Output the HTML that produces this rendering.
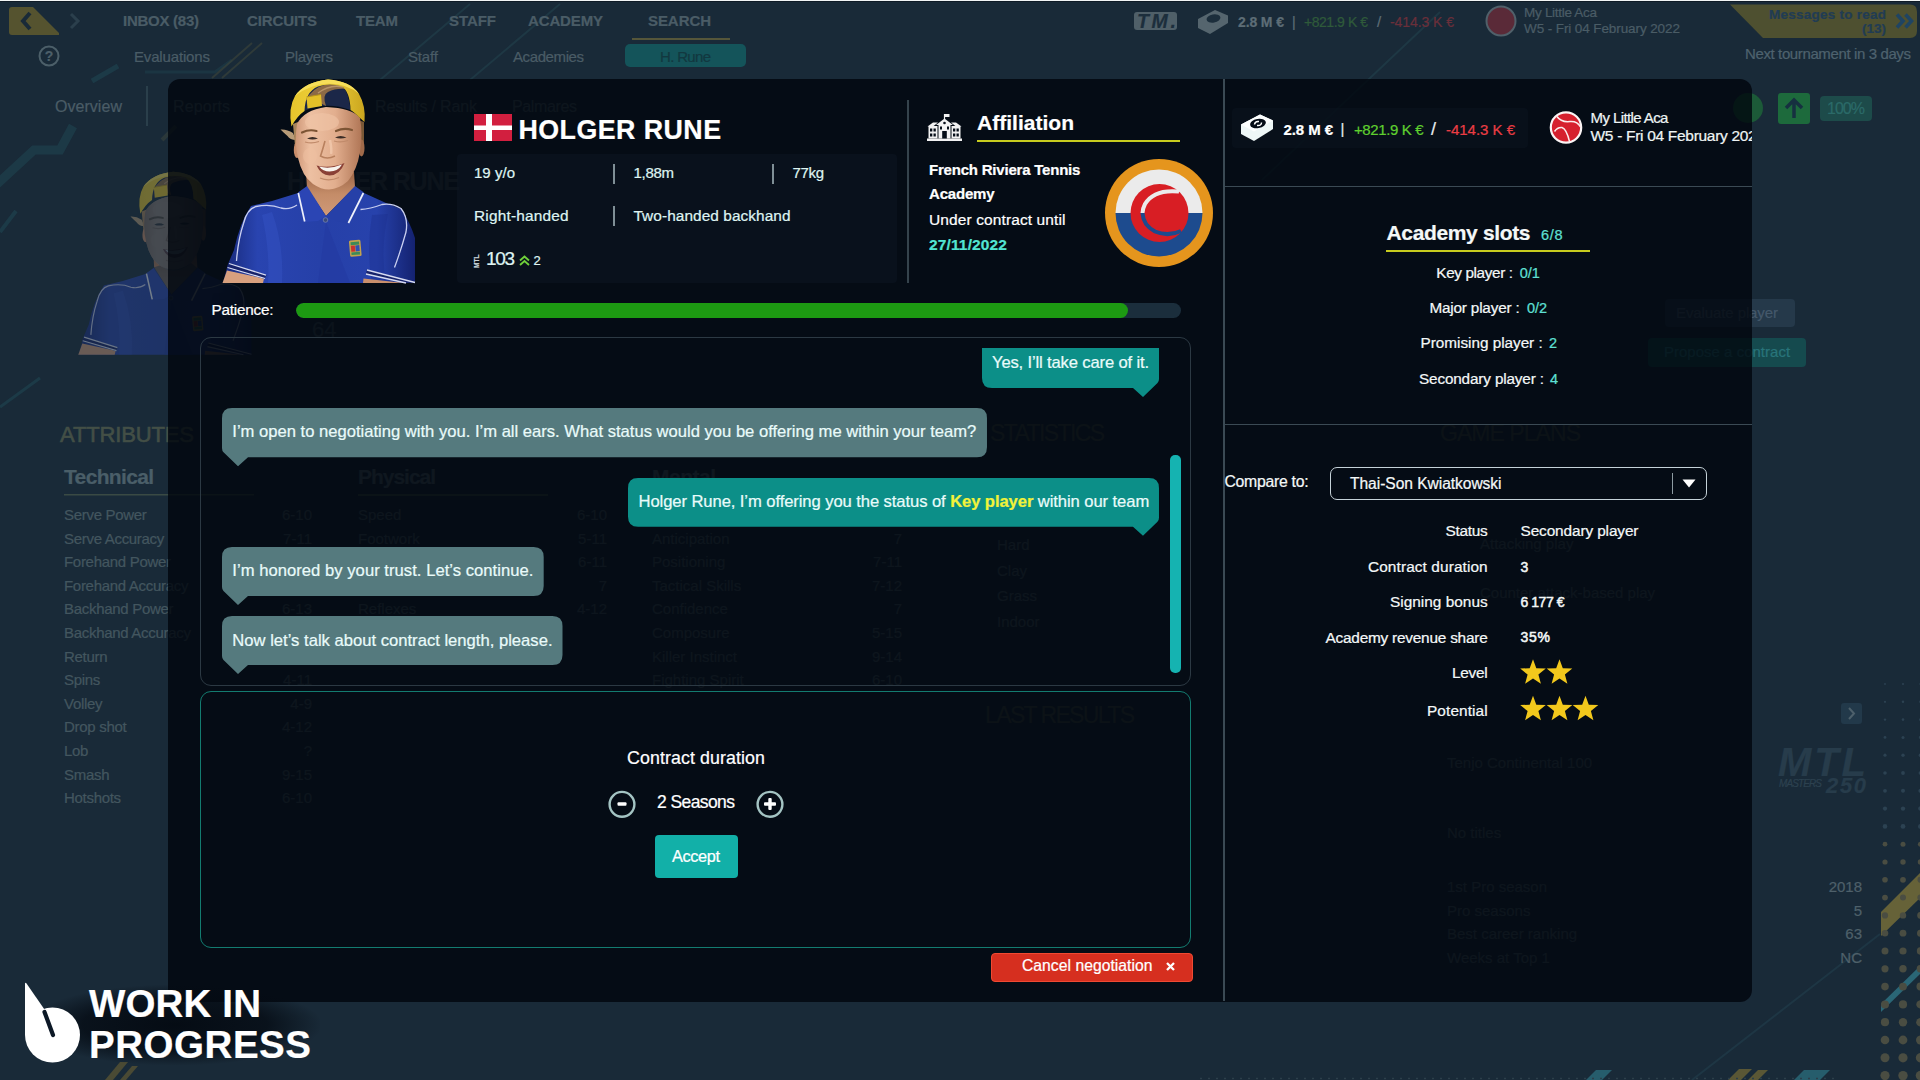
<!DOCTYPE html>
<html lang="en">
<head>
<meta charset="utf-8">
<title>Tennis Manager – Contract negotiation</title>
<style>

*{box-sizing:border-box;margin:0;padding:0}
html,body{width:1920px;height:1080px;overflow:hidden}
body{background:#192a38;font-family:"Liberation Sans",sans-serif;color:#fff;position:relative}
.t{position:absolute;white-space:pre;line-height:1;-webkit-text-stroke:.22px}
.a{position:absolute}
#bg,#fg{position:absolute;left:0;top:0;width:1920px;height:1080px;overflow:hidden}
#modal{position:absolute;left:168px;top:79px;width:1584px;height:922.500px;border-radius:12px;background:rgba(0,5,13,.8);overflow:hidden}
#modal .in{position:absolute;left:-168px;top:-79px;width:1920px;height:1080px}

</style>
</head>
<body>
<svg width="0" height="0" style="position:absolute"><defs>
<linearGradient id="skin" x1="0" x2="1"><stop offset="0" stop-color="#cf9878"/><stop offset=".22" stop-color="#edc0a2"/><stop offset=".6" stop-color="#e2ae8e"/><stop offset="1" stop-color="#b07656"/></linearGradient>
<linearGradient id="neck" x1="0" y1="0" x2="0" y2="1"><stop offset="0" stop-color="#9c6546"/><stop offset=".5" stop-color="#c48c68"/><stop offset="1" stop-color="#d09a78"/></linearGradient>
<linearGradient id="shirt" x1="0" x2="1"><stop offset="0" stop-color="#172878"/><stop offset=".18" stop-color="#2944b0"/><stop offset=".5" stop-color="#2640a8"/><stop offset=".8" stop-color="#2742ac"/><stop offset="1" stop-color="#142270"/></linearGradient>
<linearGradient id="cap" x1="0" x2="1"><stop offset="0" stop-color="#e6c42c"/><stop offset=".5" stop-color="#f0d23c"/><stop offset="1" stop-color="#caa51e"/></linearGradient>
<g id="player">
<!-- shirt body -->
<path d="M223 283 L228 264 L234 250 Q240 222 251 206 L272 201 L298 193 L326 216 L364 193 L386 203 L401 209 Q410 222 415 238 L415 283 Z" fill="url(#shirt)"/>
<!-- shirt folds -->
<path d="M326 222 L318 283 H350 Z" fill="#2238a0" opacity=".55"/>
<path d="M262 215 Q270 250 268 283 H282 Q284 245 272 212Z" fill="#3a58cc" opacity=".35"/>
<path d="M372 215 Q366 250 372 283 H386 Q380 250 388 214Z" fill="#1c3090" opacity=".45"/>
<!-- forearms -->
<path d="M222.500 283 L227 270.500 L264 278.500 L263 283Z" fill="#d8a07e"/>
<path d="M363.500 278.500 L404 283 H363Z" fill="#c98f6c"/>
<!-- cuffs -->
<path d="M229 263 L266.500 275 L264.500 279 L227 268Z" fill="#16226a"/>
<path d="M229 263.500 L266 275.200 M227.500 267.500 L265 278.500" stroke="#d5daf2" stroke-width="1.300" fill="none"/>
<path d="M367 269.500 L415 282 V283 H408 L366 274Z" fill="#16226a"/>
<path d="M367 270 L415 282.500 M366 274 L406 283" stroke="#d5daf2" stroke-width="1.300" fill="none"/>
<!-- piping -->
<path d="M236.500 261 Q238 240 243.500 223.500 Q247 209 256 206.500 Q270 203.500 281 208 Q290 210 297 205" stroke="#c9cff0" stroke-width="1.300" fill="none"/>
<path d="M394.500 267.500 Q401 250 406 232 Q408.500 218 401 208.500 Q392 203 382 204.500 Q370 209 360.500 209.500" stroke="#c9cff0" stroke-width="1.300" fill="none"/>
<!-- neck -->
<path d="M306 172 H354 L355 187 L326 216 L307 188Z" fill="url(#neck)"/>
<!-- collar -->
<path d="M298 192.500 L307 186 L326 216 L318 221 L304 222Z" fill="#2b45b4"/>
<path d="M364 192.500 L355 186 L326 216 L336 221 L348 223.500Z" fill="#2640a8"/>
<path d="M298.300 193 L304.700 221.500" stroke="#eef0fa" stroke-width="1.700"/>
<path d="M363.400 193 L348.400 223" stroke="#eef0fa" stroke-width="1.700"/>
<circle cx="325.500" cy="220" r="2.300" fill="#3a4a7a" stroke="#8a94b8" stroke-width=".600"/>
<!-- shirt logo -->
<g transform="rotate(-5 355 248)"><rect x="349.500" y="240" width="11.500" height="16.500" rx="1.500" fill="#c2a24e"/><rect x="351" y="241.800" width="8.500" height="3" fill="#3c8a58"/><rect x="351" y="245.500" width="4" height="6" fill="#c8322e"/><rect x="355.500" y="245.500" width="4" height="6" fill="#2f4fb4"/><rect x="351" y="252.200" width="8.500" height="2.600" fill="#3c8a58"/></g>
<!-- hair tuft & sides -->
<path d="M280.500 129.500 Q287 129 293 133 L296 140 Q290 140 287.500 136 Q284 133 280.500 129.500Z" fill="#b89c78"/>
<path d="M293 124 L298 122 L300 150 L295 146Z" fill="#a8845a"/>
<path d="M358 120 L364 122 L364 146 L359 152Z" fill="#7a5836"/>
<!-- ears -->
<ellipse cx="297" cy="150" rx="3.200" ry="8" fill="#c98d6a"/>
<ellipse cx="361.500" cy="148" rx="3" ry="8.500" fill="#a06a4a"/>
<!-- face -->
<path d="M297 124 Q294 142 298 158 Q302 176 313 184 Q321 189.500 329 189.500 Q339 189 348 181 Q357 170 360 152 Q363 134 360 118 Q352 108 326 107 Q304 110 297 124Z" fill="url(#skin)"/>
<ellipse cx="322" cy="122" rx="17" ry="9" fill="#f0c4a6" opacity=".6"/>
<ellipse cx="310" cy="156" rx="7" ry="8" fill="#eebfa0" opacity=".55"/>
<!-- brows / eyes -->
<path d="M302 132.500 Q309 129 316.500 131 M336 131 Q344 127.500 352 130" stroke="#7c5434" stroke-width="2.200" fill="none" stroke-linecap="round"/>
<path d="M307 138.500 Q312.500 135.500 318 138.500 Q312.500 140.500 307 138.500Z" fill="#3a2c26"/><path d="M335 137.500 Q340.500 134.500 346.500 137.500 Q340.500 139.500 335 137.500Z" fill="#3a2c26"/>
<path d="M305 142 Q312 144 319 141.500 M334 141 Q341 143 348 140.500" stroke="#c08a6a" stroke-width="1.200" fill="none"/>
<!-- nose -->
<path d="M325 141 Q322 152 320.500 156 Q327 160 335 156" stroke="#b8805e" stroke-width="1.600" fill="none"/>
<path d="M330 140 Q332 150 331 154" stroke="#f4ccb0" stroke-width="2.500" fill="none" opacity=".7"/>
<!-- mouth -->
<path d="M316.500 165.500 Q330 169 344.500 163 Q340 175 329.500 175.500 Q321 175 316.500 165.500Z" fill="#8a4036"/>
<path d="M319 166.500 Q330 169.500 342 164.500 Q338 171.500 329.500 171.500 Q323 171.500 319 166.500Z" fill="#f8f4ee"/>
<path d="M320 178 Q329 182 339 177.500" stroke="#c08a6a" stroke-width="1.200" fill="none"/>
<!-- cap: opening interior first -->
<path d="M304 111 Q304 92 318 86 Q330 82 342 86 Q349 92 350.500 110 Q326 101 304 111Z" fill="#1b2748"/>
<path d="M306 100 Q312 88 326 84.500 Q338 83 346 89 Q336 88 328 92 Q322 95 326 106 Q316 100 306 100Z" fill="#8c6a46"/>
<path d="M318 93 Q330 84 343 87" stroke="#b89468" stroke-width="1.500" fill="none"/>
<!-- cap band -->
<path d="M291.500 126.500 Q288 108 295 96 Q305 82 328 79.600 Q350 81 359 94 Q366 106 364.500 122 L360 118 Q354 112 350.500 110 Q350 92 342 86.500 Q330 82.500 318 86.500 Q305 92 304.500 111 Q297 116 291.500 126.500Z" fill="url(#cap)"/>
<path d="M295 96 Q305 82 328 79.600 Q350 81 359 94 Q348 84 328 83.500 Q308 85 295 96Z" fill="#f6de5a"/>
<!-- strap -->
<path d="M306.500 97 L321 94.500 L322 106 L307.500 108.500Z" fill="#e4c028"/>
<path d="M306.500 97 L321 94.500" stroke="#b8961a" stroke-width="1"/>
</g>
</defs></svg>
<div id="bg">
<div class="a" style="left:0;top:0;width:1920px;height:1px;background:#f2f5f5"></div><div class="a" style="left:0;top:1px;width:1920px;height:1px;background:#0f1b26"></div>
<svg class="a" style="left:0;top:0" width="1920" height="1080" viewBox="0 0 1920 1080">
<g fill="none" stroke="#1d3f4b">
<path d="M-5 186 L34 150 H60 L73 126" stroke-width="9" opacity=".75"/>
<path d="M0 232 L16 211" stroke-width="4" opacity=".8"/>
<path d="M0 407 L40 378" stroke-width="3" opacity=".8"/>
<path d="M92 81 L118 66" stroke-width="5" opacity=".8"/>
<path d="M145 72 L215 72 L232 60" stroke-width="3" opacity=".5"/>
</g>
<g stroke="#213e4a" stroke-width="2" opacity=".7"><path d="M380 80 L470 4"/><path d="M470 80 L560 4"/><path d="M1262 180 L1440 12"/><path d="M162 140 L176 126" stroke="#343f3c" stroke-width="4"/><path d="M212 78 L252 43 M222 78 L262 43" stroke="#39423a" stroke-width="2"/></g>
<!-- back button -->
<path d="M12 7 H33 L59 33 V35 H12 Q9 35 9 32 V10 Q9 7 12 7Z" fill="#55532f"/>
<path d="M30 13 L23 21 L30 29" stroke="#192a38" stroke-width="4" fill="none"/>
<path d="M71 14 L78 21 L71 28" stroke="#2b3f4c" stroke-width="3" fill="none"/>
<!-- help -->
<circle cx="49" cy="56" r="9.5" stroke="#4c5f69" stroke-width="2" fill="none"/>
<!-- search underline -->
<rect x="632" y="38" width="98" height="2" fill="#55563a"/>
<!-- H. Rune pill -->
<rect x="625" y="44" width="121" height="23" rx="5" fill="#14545a"/>
<!-- overview divider -->
<rect x="146" y="86" width="2" height="40" fill="#2a3f4b"/>
<!-- TM logo -->
<rect x="1134" y="12" width="43" height="18" rx="3" fill="#4f5f68"/>
<!-- money icon dim -->
<path d="M1198 19 L1215 10 L1228 15.500 V23 L1210 34 L1198 28Z" fill="#55656e"/><ellipse cx="1213.500" cy="18.500" rx="7" ry="4" transform="rotate(-10 1213.500 18.500)" fill="#1c2e3c"/>
<!-- ball dim -->
<circle cx="1501" cy="21" r="14.500" fill="#5a2a38" stroke="#50606a" stroke-width="2"/>
<!-- messages banner -->
<path d="M1730 4.500 H1910 Q1917 4.500 1917 11.500 V31 Q1917 38 1910 38 H1763 Z" fill="#4e5030"/>
<path d="M1897 14.500 L1903 21 L1897 27.500 M1905.500 14.500 L1911.500 21 L1905.500 27.500" stroke="#1f4463" stroke-width="3.600" fill="none"/>
<!-- 100% widgets -->
<circle cx="1748" cy="108" r="15" fill="#1c5a38"/>
<rect x="1778" y="93" width="32" height="31" rx="3" fill="#1d6a3c"/>
<path d="M1794 118 V101 M1786 108 L1794 100 L1802 108" stroke="#163040" stroke-width="3.500" fill="none"/>
<rect x="1820" y="96" width="52" height="25" rx="4" fill="#1d4b4a"/>
<!-- right buttons -->
<rect x="1665" y="299" width="130" height="28" rx="4" fill="#25394a"/>
<rect x="1648" y="338" width="158" height="29" rx="4" fill="#154a4e"/>
<!-- small > button -->
<rect x="1841" y="703" width="21" height="21" rx="3" fill="#22394a"/>
<path d="M1849 708 L1854 713.500 L1849 719" stroke="#4d606b" stroke-width="2" fill="none"/>
<!-- technical underline -->
<rect x="64" y="494" width="190" height="1.500" fill="#3a4a44"/>
<!-- yellow & teal diagonal stripes bottom-right -->
<path d="M1881 912 L1920 873 V898 L1881 936Z" fill="#666238"/>
<path d="M1881 1004 L1920 966 V974 L1881 1012Z" fill="#2a6676"/>
<path d="M1692 1080 L1880 934" stroke="#1e3644" stroke-width="2"/>
<g fill="#265d6c"><path d="M1586 1080 L1596 1070 H1612 L1602 1080Z"/><path d="M1794 1080 L1804 1070 H1830 L1820 1080Z"/></g>
<g fill="#5a5735"><path d="M1728 1080 L1739 1069 H1752 L1741 1080Z"/><path d="M1748 1080 L1758 1070 H1768 L1758 1080Z"/><path d="M105 1080 L120 1062 H128 L113 1080Z" fill="#4a4a34"/><path d="M120 1080 L132 1066 H138 L126 1080Z" fill="#4a4a34"/></g>
<path d="M1200 1078.500 H1840" stroke="#2c3f4a" stroke-width="1.500" stroke-dasharray="2 6"/>
<g><circle cx="1885" cy="684.0" r="0.9" fill="#2c4252"/><circle cx="1885" cy="701.8" r="1.1" fill="#2c4252"/><circle cx="1885" cy="719.6" r="1.2" fill="#2c4252"/><circle cx="1885" cy="737.4" r="1.4" fill="#2c4252"/><circle cx="1885" cy="755.2" r="1.6" fill="#2c4252"/><circle cx="1885" cy="773.0" r="1.8" fill="#2c4252"/><circle cx="1885" cy="790.8" r="1.9" fill="#2c4252"/><circle cx="1885" cy="808.6" r="2.1" fill="#2c4252"/><circle cx="1885" cy="826.4" r="2.3" fill="#2c4252"/><circle cx="1885" cy="844.2" r="2.4" fill="#4a4d42"/><circle cx="1885" cy="862.0" r="2.6" fill="#4a4d42"/><circle cx="1885" cy="879.8" r="2.8" fill="#4a4d42"/><circle cx="1885" cy="897.6" r="2.9" fill="#4a4d42"/><circle cx="1885" cy="915.4" r="3.1" fill="#4a4d42"/><circle cx="1885" cy="933.2" r="3.3" fill="#4a4d42"/><circle cx="1885" cy="951.0" r="3.5" fill="#4a4d42"/><circle cx="1885" cy="968.8" r="3.6" fill="#4a4d42"/><circle cx="1885" cy="986.6" r="3.8" fill="#4a4d42"/><circle cx="1885" cy="1004.4" r="4.0" fill="#4a4d42"/><circle cx="1885" cy="1022.2" r="4.1" fill="#4a4d42"/><circle cx="1885" cy="1040.0" r="4.3" fill="#4a4d42"/><circle cx="1885" cy="1057.8" r="4.5" fill="#4a4d42"/><circle cx="1885" cy="1075.6" r="4.6" fill="#4a4d42"/><circle cx="1903" cy="684.0" r="1.0" fill="#2c4252"/><circle cx="1903" cy="701.8" r="1.2" fill="#2c4252"/><circle cx="1903" cy="719.6" r="1.3" fill="#2c4252"/><circle cx="1903" cy="737.4" r="1.5" fill="#2c4252"/><circle cx="1903" cy="755.2" r="1.7" fill="#2c4252"/><circle cx="1903" cy="773.0" r="1.9" fill="#2c4252"/><circle cx="1903" cy="790.8" r="2.0" fill="#2c4252"/><circle cx="1903" cy="808.6" r="2.2" fill="#2c4252"/><circle cx="1903" cy="826.4" r="2.4" fill="#2c4252"/><circle cx="1903" cy="844.2" r="2.5" fill="#4a4d42"/><circle cx="1903" cy="862.0" r="2.7" fill="#4a4d42"/><circle cx="1903" cy="879.8" r="2.9" fill="#4a4d42"/><circle cx="1903" cy="897.6" r="3.0" fill="#4a4d42"/><circle cx="1903" cy="915.4" r="3.2" fill="#4a4d42"/><circle cx="1903" cy="933.2" r="3.4" fill="#4a4d42"/><circle cx="1903" cy="951.0" r="3.6" fill="#4a4d42"/><circle cx="1903" cy="968.8" r="3.7" fill="#4a4d42"/><circle cx="1903" cy="986.6" r="3.9" fill="#4a4d42"/><circle cx="1903" cy="1004.4" r="4.1" fill="#4a4d42"/><circle cx="1903" cy="1022.2" r="4.2" fill="#4a4d42"/><circle cx="1903" cy="1040.0" r="4.4" fill="#4a4d42"/><circle cx="1903" cy="1057.8" r="4.6" fill="#4a4d42"/><circle cx="1903" cy="1075.6" r="4.7" fill="#4a4d42"/><circle cx="1920.5" cy="684.0" r="1.1" fill="#2c4252"/><circle cx="1920.5" cy="701.8" r="1.3" fill="#2c4252"/><circle cx="1920.5" cy="719.6" r="1.4" fill="#2c4252"/><circle cx="1920.5" cy="737.4" r="1.6" fill="#2c4252"/><circle cx="1920.5" cy="755.2" r="1.8" fill="#2c4252"/><circle cx="1920.5" cy="773.0" r="1.9" fill="#2c4252"/><circle cx="1920.5" cy="790.8" r="2.1" fill="#2c4252"/><circle cx="1920.5" cy="808.6" r="2.3" fill="#2c4252"/><circle cx="1920.5" cy="826.4" r="2.5" fill="#2c4252"/><circle cx="1920.5" cy="844.2" r="2.6" fill="#4a4d42"/><circle cx="1920.5" cy="862.0" r="2.8" fill="#4a4d42"/><circle cx="1920.5" cy="879.8" r="3.0" fill="#4a4d42"/><circle cx="1920.5" cy="897.6" r="3.1" fill="#4a4d42"/><circle cx="1920.5" cy="915.4" r="3.3" fill="#4a4d42"/><circle cx="1920.5" cy="933.2" r="3.5" fill="#4a4d42"/><circle cx="1920.5" cy="951.0" r="3.7" fill="#4a4d42"/><circle cx="1920.5" cy="968.8" r="3.8" fill="#4a4d42"/><circle cx="1920.5" cy="986.6" r="4.0" fill="#4a4d42"/><circle cx="1920.5" cy="1004.4" r="4.2" fill="#4a4d42"/><circle cx="1920.5" cy="1022.2" r="4.3" fill="#4a4d42"/><circle cx="1920.5" cy="1040.0" r="4.5" fill="#4a4d42"/><circle cx="1920.5" cy="1057.8" r="4.7" fill="#4a4d42"/><circle cx="1920.5" cy="1075.6" r="4.8" fill="#4a4d42"/></g>
</svg>
<div class="t" style="top:13px;font-size:15px;left:123.0px;letter-spacing:-0.26px;color:#4a5c66;font-weight:700;">INBOX (83)</div>
<div class="t" style="top:13px;font-size:15px;left:247.0px;letter-spacing:-0.12px;color:#4a5c66;font-weight:700;">CIRCUITS</div>
<div class="t" style="top:13px;font-size:15px;left:356.0px;letter-spacing:-0.17px;color:#4a5c66;font-weight:700;">TEAM</div>
<div class="t" style="top:13px;font-size:15px;left:449.0px;letter-spacing:-0.05px;color:#4a5c66;font-weight:700;">STAFF</div>
<div class="t" style="top:13px;font-size:15px;left:528.0px;letter-spacing:-0.14px;color:#4a5c66;font-weight:700;">ACADEMY</div>
<div class="t" style="top:13px;font-size:15px;left:648.0px;letter-spacing:-0.07px;color:#4a5c66;font-weight:700;">SEARCH</div>
<div class="t" style="top:49px;font-size:15px;left:134.0px;letter-spacing:-0.16px;color:#4a5c66;">Evaluations</div>
<div class="t" style="top:49px;font-size:15px;left:285.0px;letter-spacing:-0.34px;color:#4a5c66;">Players</div>
<div class="t" style="top:49px;font-size:15px;left:408.0px;letter-spacing:-0.15px;color:#4a5c66;">Staff</div>
<div class="t" style="top:49px;font-size:15px;left:513.0px;letter-spacing:-0.40px;color:#4a5c66;">Academies</div>
<div class="t" style="top:49px;font-size:15px;left:660.0px;letter-spacing:-0.67px;color:#123840;">H. Rune</div>
<div class="t" style="top:49px;font-size:14px;left:44.7px;color:#4c5f69;font-weight:700;">?</div>
<div class="t" style="top:99px;font-size:16px;left:55.0px;letter-spacing:0.04px;color:#4a5c66;">Overview</div>
<div class="t" style="top:12px;font-size:19.5px;left:1137.0px;letter-spacing:2.71px;color:#1c2e3c;font-weight:700;font-style:italic;">TM.</div>
<div class="t" style="top:15px;font-size:14px;left:1238.0px;letter-spacing:-0.12px;color:#5d6d76;font-weight:700;">2.8 M €</div>
<div class="t" style="top:15px;font-size:14px;left:1292.0px;color:#5d6d76;">|</div>
<div class="t" style="top:15px;font-size:14px;left:1304.0px;letter-spacing:-0.46px;color:#2f5a3a;">+821.9 K €</div>
<div class="t" style="top:14px;font-size:15px;left:1377.0px;color:#5d6d76;">/</div>
<div class="t" style="top:15px;font-size:14px;left:1390.0px;letter-spacing:-0.07px;color:#6a2f3a;">-414.3 K €</div>
<div class="t" style="top:6px;font-size:13.5px;left:1524.0px;letter-spacing:-0.29px;color:#4a5c66;">My Little Aca</div>
<div class="t" style="top:22px;font-size:13.5px;left:1524.0px;letter-spacing:-0.10px;color:#4a5c66;">W5 - Fri 04 February 2022</div>
<div class="t" style="top:8px;font-size:13.5px;left:1769.0px;letter-spacing:0.25px;color:#213c54;font-weight:700;">Messages to read</div>
<div class="t" style="top:22px;font-size:13.5px;right:34.0px;color:#213c54;font-weight:700;">(13)</div>
<div class="t" style="top:46px;font-size:15px;left:1745.0px;letter-spacing:-0.38px;color:#4e626e;">Next tournament in 3 days</div>
<div class="t" style="top:101px;font-size:16px;left:1827.0px;letter-spacing:-0.97px;color:#2b6a68;">100%</div>
<div class="t" style="top:305px;font-size:15px;left:1676.0px;letter-spacing:-0.10px;color:#44586a;">Evaluate player</div>
<div class="t" style="top:344px;font-size:15px;left:1664.0px;letter-spacing:0.01px;color:#28747a;">Propose a contract</div>
<div class="t" style="top:424px;font-size:22px;left:60.0px;letter-spacing:-0.14px;color:#434f46;-webkit-text-stroke:.6px;">ATTRIBUTES</div>
<div class="t" style="top:466px;font-size:21px;left:64.0px;letter-spacing:-0.66px;color:#4a5e68;font-weight:700;">Technical</div>
<div class="t" style="top:507px;font-size:15px;left:64.0px;color:#43565f;letter-spacing:-.3px;">Serve Power</div>
<div class="t" style="top:531px;font-size:15px;left:64.0px;color:#43565f;letter-spacing:-.3px;">Serve Accuracy</div>
<div class="t" style="top:554px;font-size:15px;left:64.0px;color:#43565f;letter-spacing:-.3px;">Forehand Power</div>
<div class="t" style="top:578px;font-size:15px;left:64.0px;color:#43565f;letter-spacing:-.3px;">Forehand Accuracy</div>
<div class="t" style="top:601px;font-size:15px;left:64.0px;color:#43565f;letter-spacing:-.3px;">Backhand Power</div>
<div class="t" style="top:625px;font-size:15px;left:64.0px;color:#43565f;letter-spacing:-.3px;">Backhand Accuracy</div>
<div class="t" style="top:649px;font-size:15px;left:64.0px;color:#43565f;letter-spacing:-.3px;">Return</div>
<div class="t" style="top:672px;font-size:15px;left:64.0px;color:#43565f;letter-spacing:-.3px;">Spins</div>
<div class="t" style="top:696px;font-size:15px;left:64.0px;color:#43565f;letter-spacing:-.3px;">Volley</div>
<div class="t" style="top:719px;font-size:15px;left:64.0px;color:#43565f;letter-spacing:-.3px;">Drop shot</div>
<div class="t" style="top:743px;font-size:15px;left:64.0px;color:#43565f;letter-spacing:-.3px;">Lob</div>
<div class="t" style="top:767px;font-size:15px;left:64.0px;color:#43565f;letter-spacing:-.3px;">Smash</div>
<div class="t" style="top:790px;font-size:15px;left:64.0px;color:#43565f;letter-spacing:-.3px;">Hotshots</div>
<div class="t" style="top:742px;font-size:40px;left:1778.0px;letter-spacing:2.91px;color:#273c4b;font-weight:700;font-style:italic;">MTL</div>
<div class="t" style="top:779px;font-size:10px;left:1779.0px;letter-spacing:-0.89px;color:#2c414f;font-style:italic;">MASTERS</div>
<div class="t" style="top:775px;font-size:22px;left:1826.0px;letter-spacing:1.64px;color:#273c4b;font-weight:700;font-style:italic;">250</div>
<div class="t" style="top:879px;font-size:15px;right:58.0px;color:#4e606a;">2018</div>
<div class="t" style="top:903px;font-size:15px;right:58.0px;color:#4e606a;">5</div>
<div class="t" style="top:926px;font-size:15px;right:58.0px;color:#4e606a;">63</div>
<div class="t" style="top:950px;font-size:15px;right:58.0px;color:#4e606a;">NC</div>
<div class="t" style="top:99px;font-size:16px;left:173.0px;letter-spacing:0.16px;color:#43565f;">Reports</div>
<div class="t" style="top:99px;font-size:16px;left:375.0px;letter-spacing:-0.16px;color:#43565f;">Results / Rank</div>
<div class="t" style="top:99px;font-size:16px;left:512.0px;letter-spacing:-0.37px;color:#43565f;">Palmares</div>
<div class="t" style="top:169px;font-size:25px;left:287.0px;letter-spacing:-1.17px;color:#3c4d58;font-weight:700;">HOLGER RUNE</div>
<div class="t" style="top:319px;font-size:22px;left:312.0px;color:#3a4b56;">64</div>
<div class="t" style="top:466px;font-size:21px;left:358.0px;letter-spacing:-1.03px;color:#4a5e68;font-weight:700;">Physical</div>
<div class="t" style="top:466px;font-size:21px;left:652.0px;letter-spacing:-0.50px;color:#4a5e68;font-weight:700;">Mental</div>
<div class="a" style="left:358px;top:494px;width:190px;height:1.500px;background:#3a4a44"></div>
<div class="a" style="left:652px;top:494px;width:250px;height:1.500px;background:#3a4a44"></div>
<div class="t" style="top:507px;font-size:15px;right:1608.0px;color:#43565f;">6-10</div>
<div class="t" style="top:531px;font-size:15px;right:1608.0px;color:#43565f;">7-11</div>
<div class="t" style="top:554px;font-size:15px;right:1608.0px;color:#43565f;">6-11</div>
<div class="t" style="top:578px;font-size:15px;right:1608.0px;color:#43565f;">7</div>
<div class="t" style="top:601px;font-size:15px;right:1608.0px;color:#43565f;">6-13</div>
<div class="t" style="top:625px;font-size:15px;right:1608.0px;color:#43565f;">7</div>
<div class="t" style="top:649px;font-size:15px;right:1608.0px;color:#43565f;">7</div>
<div class="t" style="top:672px;font-size:15px;right:1608.0px;color:#43565f;">4-11</div>
<div class="t" style="top:696px;font-size:15px;right:1608.0px;color:#43565f;">4-9</div>
<div class="t" style="top:719px;font-size:15px;right:1608.0px;color:#43565f;">4-12</div>
<div class="t" style="top:743px;font-size:15px;right:1608.0px;color:#43565f;">?</div>
<div class="t" style="top:767px;font-size:15px;right:1608.0px;color:#43565f;">9-15</div>
<div class="t" style="top:790px;font-size:15px;right:1608.0px;color:#43565f;">6-10</div>
<div class="t" style="top:507px;font-size:15px;left:358.0px;color:#43565f;">Speed</div>
<div class="t" style="top:507px;font-size:15px;right:1313.0px;color:#43565f;">6-10</div>
<div class="t" style="top:531px;font-size:15px;left:358.0px;color:#43565f;">Footwork</div>
<div class="t" style="top:531px;font-size:15px;right:1313.0px;color:#43565f;">5-11</div>
<div class="t" style="top:554px;font-size:15px;right:1313.0px;color:#43565f;">6-11</div>
<div class="t" style="top:578px;font-size:15px;right:1313.0px;color:#43565f;">7</div>
<div class="t" style="top:601px;font-size:15px;left:358.0px;color:#43565f;">Reflexes</div>
<div class="t" style="top:601px;font-size:15px;right:1313.0px;color:#43565f;">4-12</div>
<div class="t" style="top:531px;font-size:15px;left:652.0px;color:#43565f;">Anticipation</div>
<div class="t" style="top:531px;font-size:15px;right:1018.0px;color:#43565f;">7</div>
<div class="t" style="top:554px;font-size:15px;left:652.0px;color:#43565f;">Positioning</div>
<div class="t" style="top:554px;font-size:15px;right:1018.0px;color:#43565f;">7-11</div>
<div class="t" style="top:578px;font-size:15px;left:652.0px;color:#43565f;">Tactical Skills</div>
<div class="t" style="top:578px;font-size:15px;right:1018.0px;color:#43565f;">7-12</div>
<div class="t" style="top:601px;font-size:15px;left:652.0px;color:#43565f;">Confidence</div>
<div class="t" style="top:601px;font-size:15px;right:1018.0px;color:#43565f;">7</div>
<div class="t" style="top:625px;font-size:15px;left:652.0px;color:#43565f;">Composure</div>
<div class="t" style="top:625px;font-size:15px;right:1018.0px;color:#43565f;">5-15</div>
<div class="t" style="top:649px;font-size:15px;left:652.0px;color:#43565f;">Killer Instinct</div>
<div class="t" style="top:649px;font-size:15px;right:1018.0px;color:#43565f;">9-14</div>
<div class="t" style="top:672px;font-size:15px;left:652.0px;color:#43565f;">Fighting Spirit</div>
<div class="t" style="top:672px;font-size:15px;right:1018.0px;color:#43565f;">6-10</div>
<div class="t" style="top:422px;font-size:23px;left:990.0px;letter-spacing:-1.61px;color:#3c4840;">STATISTICS</div>
<div class="t" style="top:537px;font-size:15px;left:997.0px;color:#43565f;">Hard</div>
<div class="t" style="top:563px;font-size:15px;left:997.0px;color:#43565f;">Clay</div>
<div class="t" style="top:588px;font-size:15px;left:997.0px;color:#43565f;">Grass</div>
<div class="t" style="top:614px;font-size:15px;left:997.0px;color:#43565f;">Indoor</div>
<div class="t" style="top:422px;font-size:23px;left:1440.0px;letter-spacing:-0.95px;color:#3c4840;">GAME PLANS</div>
<div class="t" style="top:536px;font-size:15px;left:1480.0px;color:#43565f;">Attacking play</div>
<div class="t" style="top:585px;font-size:15px;left:1480.0px;color:#43565f;">Counter attack-based play</div>
<div class="t" style="top:704px;font-size:23px;left:985.0px;letter-spacing:-1.62px;color:#3c4840;">LAST RESULTS</div>
<div class="t" style="top:755px;font-size:15px;left:1447.0px;color:#43565f;">Tenjo Continental 100</div>
<div class="t" style="top:825px;font-size:15px;left:1447.0px;color:#43565f;">No titles</div>
<div class="t" style="top:879px;font-size:15px;left:1447.0px;color:#43565f;">1st Pro season</div>
<div class="t" style="top:903px;font-size:15px;left:1447.0px;color:#43565f;">Pro seasons</div>
<div class="t" style="top:926px;font-size:15px;left:1447.0px;color:#43565f;">Best career ranking</div>
<div class="t" style="top:950px;font-size:15px;left:1447.0px;color:#43565f;">Weeks at Top 1</div>
</div>
<svg class="a" style="left:0;top:0;opacity:.42" width="1920" height="1080" viewBox="0 0 1920 1080"><g transform="translate(175 172) scale(.9) translate(-330 -80)"><use href="#player"/><path d="M297 124 Q294 142 298 158 Q302 176 313 184 Q321 189.500 329 189.500 Q339 189 348 181 Q357 170 360 152 Q363 134 360 118 Q352 108 326 107 Q304 110 297 124Z" fill="#1c3044" opacity=".5"/><path d="M306 186 L313 184 Q329 194 348 181 L355 187 L326 216 L307 188Z" fill="#1c3044" opacity=".5"/></g></svg>
<div id="modal"><div class="in">
<div class="a" style="left:457px;top:154px;width:440px;height:129px;background:rgba(12,22,34,.55);border-radius:4px"></div>
<svg class="a" style="left:0;top:0" width="1920" height="1080" viewBox="0 0 1920 1080"><use href="#player"/></svg>
<svg class="a" style="left:474px;top:114px" width="38" height="27" viewBox="0 0 38 27"><rect width="38" height="27" fill="#d21f3f"/><rect x="12" width="6" height="27" fill="#fff"/><rect y="11.500" width="38" height="4.500" fill="#fff"/></svg>
<div class="t" style="top:117px;font-size:26.8px;left:518.5px;letter-spacing:0.45px;font-weight:700;">HOLGER RUNE</div>
<div class="t" style="top:165px;font-size:15px;left:474.0px;letter-spacing:0.03px;color:#dff4f2;">19 y/o</div>
<div class="t" style="top:165px;font-size:15px;left:633.5px;letter-spacing:-0.30px;color:#dff4f2;">1,88m</div>
<div class="t" style="top:165px;font-size:15px;left:792.5px;letter-spacing:-0.34px;color:#dff4f2;">77kg</div>
<div class="t" style="top:208px;font-size:15.4px;left:474.0px;letter-spacing:0.19px;color:#dff4f2;">Right-handed</div>
<div class="t" style="top:208px;font-size:15.4px;left:633.5px;letter-spacing:0.07px;color:#dff4f2;">Two-handed backhand</div>
<div class="a" style="left:613px;top:164px;width:2px;height:20px;background:#7f8f96"></div>
<div class="a" style="left:772px;top:164px;width:2px;height:20px;background:#7f8f96"></div>
<div class="a" style="left:613px;top:206px;width:2px;height:20px;background:#7f8f96"></div>
<div class="t" style="top:-3px;font-size:6.5px;left:0.0px;color:#c9d6d8;font-weight:700;left:474px;top:268px;transform:rotate(-90deg);transform-origin:0 0;">MTL</div>
<div class="t" style="top:249px;font-size:19px;left:486.0px;letter-spacing:-1.35px;color:#dff4f2;">103</div>
<svg class="a" style="left:519px;top:255px" width="11" height="11" viewBox="0 0 11 11"><path d="M1 5.500 L5.500 1.500 L10 5.500 M1 10 L5.500 6 L10 10" stroke="#6fd03a" stroke-width="1.800" fill="none"/></svg>
<div class="t" style="top:254px;font-size:13px;left:533.5px;color:#dff4f2;">2</div>
<div class="a" style="left:907px;top:100px;width:1.500px;height:183px;background:#35434c"></div>
<svg class="a" style="left:927px;top:114px" width="35" height="27" viewBox="0 0 35 27"><g fill="#f2f2f2">
<rect x="0" y="24.500" width="35" height="2.500"/>
<rect x="1.500" y="12" width="9" height="12.500"/><rect x="24.500" y="12" width="9" height="12.500"/>
<rect x="11.500" y="10.500" width="12" height="14"/>
<path d="M9 11 L17.500 4.500 L26 11Z"/><path d="M0.500 12.500 L6 8.500 H11 L6 12.500Z"/><path d="M34.500 12.500 L29 8.500 H24 L29 12.500Z"/>
<rect x="16.900" y="0" width="1.200" height="6"/><path d="M18 0 H22.500 V3 H18Z"/></g>
<g fill="#050d17"><rect x="3" y="14.500" width="2.300" height="3"/><rect x="6.500" y="14.500" width="2.300" height="3"/><rect x="3" y="19.500" width="2.300" height="3"/><rect x="6.500" y="19.500" width="2.300" height="3"/>
<rect x="26" y="14.500" width="2.300" height="3"/><rect x="29.500" y="14.500" width="2.300" height="3"/><rect x="26" y="19.500" width="2.300" height="3"/><rect x="29.500" y="19.500" width="2.300" height="3"/>
<rect x="15.200" y="17" width="4.600" height="7.500"/><rect x="13" y="12.500" width="2" height="3"/><rect x="20" y="12.500" width="2" height="3"/><circle cx="17.500" cy="9" r="1.300"/></g></svg>
<div class="t" style="top:112px;font-size:21px;left:977.0px;letter-spacing:0.02px;font-weight:700;">Affiliation</div>
<div class="a" style="left:977px;top:139.500px;width:203px;height:2px;background:#c7cc1e"></div>
<div class="t" style="top:162px;font-size:15px;left:929.0px;letter-spacing:-0.21px;font-weight:700;">French Riviera Tennis</div>
<div class="t" style="top:186px;font-size:15px;left:929.0px;letter-spacing:-0.20px;font-weight:700;">Academy</div>
<div class="t" style="top:212px;font-size:15.5px;left:929.0px;letter-spacing:0.11px;">Under contract until</div>
<div class="t" style="top:237px;font-size:15.5px;left:929.0px;letter-spacing:0.14px;color:#52e4d2;font-weight:700;">27/11/2022</div>
<svg class="a" style="left:1104px;top:158px" width="110" height="110" viewBox="0 0 110 110">
<defs><clipPath id="lc"><circle cx="55" cy="55" r="43.500"/></clipPath></defs>
<circle cx="55" cy="55" r="54" fill="#e5951d"/>
<g clip-path="url(#lc)"><rect x="0" y="0" width="110" height="55" fill="#ebebeb"/><rect x="0" y="55" width="110" height="55" fill="#1d4b8e"/></g>
<circle cx="55.500" cy="55" r="29" fill="#d81e24"/>
<path d="M75 33.500 Q50 31 41 46 Q38.500 51 38.500 55" stroke="#ebebeb" stroke-width="4" fill="none"/>
<path d="M38.500 55 Q39 67 51 73.500 Q64 79 77 73" stroke="#1d4b8e" stroke-width="4" fill="none"/>
</svg>
<div class="t" style="top:302px;font-size:15.3px;left:211.5px;letter-spacing:-0.22px;color:#ffffff;">Patience:</div>
<div class="a" style="left:296px;top:302.500px;width:885px;height:15px;border-radius:8px;background:#1b2e3c;overflow:hidden"><div style="width:832px;height:100%;background:#1d9a12;border-radius:8px"></div></div>
<div class="a" style="left:200px;top:337px;width:991px;height:348.500px;border:1.500px solid #2c3943;border-radius:11px;overflow:hidden">
</div>
<svg class="a" style="left:982px;top:347.5px" width="177" height="50" viewBox="0 0 177 50"><path d="M0 0 H177 V31 Q177 33.5 175.5 35 L161 49 L151 40 H10 Q0 40 0 30 Z" fill="#0c8f88"/></svg>
<div class="t" style="top:355px;font-size:16.6px;left:992.0px;letter-spacing:-0.15px;color:#e9fbfa;">Yes, I’ll take care of it.</div>
<svg class="a" style="left:222px;top:408px" width="765" height="59.3" viewBox="0 0 765 59.3"><path d="M10 0 H755 Q765 0 765 10 V39.3 Q765 49.3 755 49.3 H26 L16 58.3 L1.5 44.3 Q0 42.8 0 40.3 V10 Q0 0 10 0Z" fill="#557a7e"/></svg>
<div class="t" style="top:424px;font-size:16.6px;left:232.3px;color:#e9fbfa;">I’m open to negotiating with you. I’m all ears. What status would you be offering me within your team?</div>
<svg class="a" style="left:628px;top:477.5px" width="531" height="58.8" viewBox="0 0 531 58.8"><path d="M10 0 H521 Q531 0 531 10 V39.8 Q531 42.3 529.5 43.8 L515 57.8 L505 48.8 H10 Q0 48.8 0 38.8 V10 Q0 0 10 0Z" fill="#0c8f88"/></svg>
<div class="t" style="top:494px;font-size:16.6px;left:638.5px;letter-spacing:-0.08px;color:#e9fbfa;">Holger Rune, I’m offering you the status of <b style="color:#f2f23a">Key player</b> within our team</div>
<svg class="a" style="left:222px;top:547px" width="321.7" height="59" viewBox="0 0 321.7 59"><path d="M10 0 H311.7 Q321.7 0 321.7 10 V39 Q321.7 49 311.7 49 H26 L16 58 L1.5 44 Q0 42.5 0 40 V10 Q0 0 10 0Z" fill="#557a7e"/></svg>
<div class="t" style="top:563px;font-size:16.6px;left:232.3px;letter-spacing:0.04px;color:#e9fbfa;">I’m honored by your trust. Let’s continue.</div>
<svg class="a" style="left:222px;top:616.3px" width="340.5" height="59" viewBox="0 0 340.5 59"><path d="M10 0 H330.5 Q340.5 0 340.5 10 V39 Q340.5 49 330.5 49 H26 L16 58 L1.5 44 Q0 42.5 0 40 V10 Q0 0 10 0Z" fill="#557a7e"/></svg>
<div class="t" style="top:633px;font-size:16.6px;left:232.3px;letter-spacing:0.01px;color:#e9fbfa;">Now let’s talk about contract length, please.</div>
<div class="a" style="left:1170px;top:455px;width:10.500px;height:218px;border-radius:5px;background:#15b3b1"></div>
<div class="a" style="left:200px;top:691px;width:991px;height:257px;border:1.500px solid #137c70;border-radius:11px"></div>
<div class="t" style="top:750px;font-size:17.8px;left:627.0px;letter-spacing:0.10px;color:#ffffff;">Contract duration</div>
<svg class="a" style="left:606px;top:788px" width="180" height="32" viewBox="0 0 180 32">
<circle cx="16" cy="16.300" r="12.400" stroke="#a4c4c3" stroke-width="2.400" fill="none"/><rect x="11.500" y="14.300" width="9" height="3.400" rx="1" fill="#fff"/>
<circle cx="164" cy="16.300" r="12.400" stroke="#a4c4c3" stroke-width="2.400" fill="none"/><rect x="158" y="14.300" width="12" height="3.400" rx="1" fill="#fff"/><rect x="162.300" y="10" width="3.400" height="12" rx="1" fill="#fff"/>
</svg>
<div class="t" style="top:794px;font-size:17.5px;left:657.0px;letter-spacing:-0.59px;color:#ffffff;">2 Seasons</div>
<div class="a" style="left:654.500px;top:834.500px;width:83px;height:43px;border-radius:4px;background:#12b0a8"></div>
<div class="t" style="top:848px;font-size:16.3px;left:672.0px;letter-spacing:-0.36px;color:#ffffff;">Accept</div>
<div class="a" style="left:991px;top:952.500px;width:202px;height:29px;border-radius:4px;background:#d62f1f;border:1px solid #ef4a32"></div>
<div class="t" style="top:958px;font-size:15.7px;left:1022.0px;letter-spacing:0.03px;color:#ffffff;">Cancel negotiation</div>
<svg class="a" style="left:1165px;top:961px" width="11" height="11" viewBox="0 0 11 11"><path d="M2 2 L9 9 M9 2 L2 9" stroke="#fff" stroke-width="2.300"/></svg>
<div class="a" style="left:1223px;top:79px;width:1.500px;height:922px;background:#3b4a54"></div>
<div class="a" style="left:1224px;top:185.500px;width:528px;height:1.500px;background:#3b4a54"></div>
<div class="a" style="left:1224px;top:423.500px;width:528px;height:1.500px;background:#3b4a54"></div>
<div class="a" style="left:1232px;top:108px;width:296px;height:40px;background:rgba(12,22,34,.4);border-radius:4px"></div>
<svg class="a" style="left:1240px;top:113px" width="34" height="29" viewBox="0 0 34 29">
<path d="M1 11.500 L20 1.500 L33 7.500 V16 L14 28 L1 21Z" fill="#eef7f7"/><path d="M1 11.500 L14 18.500 L33 7.500 L20 1.500Z" fill="#fdffff"/>
<ellipse cx="18" cy="10.500" rx="8" ry="4.600" transform="rotate(-10 18 10.500)" fill="#050d17"/>
<path d="M14.500 11.500 Q15 8 19 8.500 M21.500 9.500 Q21.500 13 17 12.500" stroke="#fff" stroke-width="1.500" fill="none"/></svg>
<div class="t" style="top:122px;font-size:15px;left:1283.5px;letter-spacing:-0.09px;font-weight:700;">2.8 M €</div>
<div class="t" style="top:121px;font-size:15px;left:1340.5px;color:#e8eef0;">|</div>
<div class="t" style="top:122px;font-size:15px;left:1354.0px;letter-spacing:-0.39px;color:#5fcf2f;">+821.9 K €</div>
<div class="t" style="top:120px;font-size:18px;left:1431.0px;color:#e8eef0;">/</div>
<div class="t" style="top:122px;font-size:15px;left:1446.0px;letter-spacing:-0.02px;color:#ea3d44;">-414.3 K €</div>
<svg class="a" style="left:1548px;top:110px" width="36" height="36" viewBox="1548 110 36 36">
<circle cx="1566" cy="127.500" r="15.200" fill="#d6202e" stroke="#fbf4f4" stroke-width="2.200"/>
<path d="M1557 116.500 Q1561 122.500 1570 121.500 Q1577.500 121 1580.500 127" stroke="#fbecec" stroke-width="1.500" fill="none"/>
<path d="M1554.500 131.500 Q1557.500 127 1562 127.500 Q1566.500 129 1569.500 141.500" stroke="#fbecec" stroke-width="1.500" fill="none"/></svg>
<div class="t" style="top:110px;font-size:15px;left:1590.5px;letter-spacing:-0.59px;color:#eef4f4;">My Little Aca</div>
<div class="t" style="top:128px;font-size:15.5px;left:1590.5px;letter-spacing:-0.30px;color:#eef4f4;">W5 - Fri 04 February 2022</div>
<div class="t" style="top:222px;font-size:21px;left:1386.5px;letter-spacing:-0.35px;color:#f4f8f8;font-weight:700;">Academy slots</div>
<div class="t" style="top:228px;font-size:14.5px;left:1541.0px;letter-spacing:0.66px;color:#5fe0d6;">6/8</div>
<div class="a" style="left:1386px;top:250px;width:204px;height:2px;background:#c7cc1e"></div>
<div class="t" style="top:265px;font-size:15.3px;left:1436.3px;letter-spacing:-0.37px;color:#f4f8f8;">Key player :</div>
<div class="t" style="top:266px;font-size:14.5px;left:1519.7px;color:#5fe0d6;">0/1</div>
<div class="t" style="top:300px;font-size:15.3px;left:1429.4px;letter-spacing:-0.18px;color:#f4f8f8;">Major player :</div>
<div class="t" style="top:301px;font-size:14.5px;left:1527.0px;color:#5fe0d6;">0/2</div>
<div class="t" style="top:335px;font-size:15.3px;left:1420.6px;letter-spacing:-0.02px;color:#f4f8f8;">Promising player :</div>
<div class="t" style="top:336px;font-size:14.5px;left:1549.0px;color:#5fe0d6;">2</div>
<div class="t" style="top:371px;font-size:15.3px;left:1419.0px;letter-spacing:-0.15px;color:#f4f8f8;">Secondary player :</div>
<div class="t" style="top:372px;font-size:14.5px;left:1550.0px;color:#5fe0d6;">4</div>
<div class="t" style="top:474px;font-size:15.8px;left:1224.5px;letter-spacing:-0.29px;color:#f4f8f8;">Compare to:</div>
<div class="a" style="left:1329.500px;top:467px;width:377px;height:33px;border:1.500px solid #c5d2d8;border-radius:7px"></div>
<div class="t" style="top:476px;font-size:15.6px;left:1350.0px;letter-spacing:-0.05px;color:#f4f8f8;">Thai-Son Kwiatkowski</div>
<div class="a" style="left:1671.500px;top:473px;width:1.500px;height:21px;background:#8d9ba2"></div>
<svg class="a" style="left:1682px;top:479px" width="14" height="9" viewBox="0 0 14 9"><path d="M0.500 0.500 H13.500 L7 8.500Z" fill="#fff"/></svg>
<div class="t" style="top:523px;font-size:15.4px;left:1445.5px;letter-spacing:-0.29px;color:#f4f8f8;">Status</div>
<div class="t" style="top:559px;font-size:15.4px;left:1368.0px;letter-spacing:0.10px;color:#f4f8f8;">Contract duration</div>
<div class="t" style="top:594px;font-size:15.4px;left:1390.0px;letter-spacing:0.01px;color:#f4f8f8;">Signing bonus</div>
<div class="t" style="top:630px;font-size:15.4px;left:1325.5px;letter-spacing:-0.23px;color:#f4f8f8;">Academy revenue share</div>
<div class="t" style="top:665px;font-size:15.4px;left:1452.0px;letter-spacing:-0.27px;color:#f4f8f8;">Level</div>
<div class="t" style="top:703px;font-size:15.4px;left:1427.0px;letter-spacing:0.10px;color:#f4f8f8;">Potential</div>
<div class="t" style="top:523px;font-size:15.4px;left:1520.5px;letter-spacing:-0.12px;color:#f4f8f8;">Secondary player</div>
<div class="t" style="top:560px;font-size:14px;left:1520.5px;color:#f4f8f8;-webkit-text-stroke:.5px;">3</div>
<div class="t" style="top:595px;font-size:14px;left:1520.5px;letter-spacing:-0.45px;color:#f4f8f8;-webkit-text-stroke:.5px;">6 177 €</div>
<div class="t" style="top:630px;font-size:14px;left:1520.5px;letter-spacing:0.73px;color:#f4f8f8;-webkit-text-stroke:.5px;">35%</div>
<svg class="a" style="left:1510px;top:650px" width="100" height="80" viewBox="1510 650 100 80"><polygon points="1533.0,659.3 1536.3,668.2 1545.8,668.6 1538.4,674.6 1540.9,683.7 1533.0,678.5 1525.1,683.7 1527.6,674.6 1520.2,668.6 1529.7,668.2" fill="#f2c81c"/><polygon points="1559.5,659.3 1562.8,668.2 1572.3,668.6 1564.9,674.6 1567.4,683.7 1559.5,678.5 1551.6,683.7 1554.1,674.6 1546.7,668.6 1556.2,668.2" fill="#f2c81c"/><polygon points="1533.0,695.8 1536.3,704.7 1545.8,705.1 1538.4,711.1 1540.9,720.2 1533.0,715.0 1525.1,720.2 1527.6,711.1 1520.2,705.1 1529.7,704.7" fill="#f2c81c"/><polygon points="1559.5,695.8 1562.8,704.7 1572.3,705.1 1564.9,711.1 1567.4,720.2 1559.5,715.0 1551.6,720.2 1554.1,711.1 1546.7,705.1 1556.2,704.7" fill="#f2c81c"/><polygon points="1585.5,695.8 1588.8,704.7 1598.3,705.1 1590.9,711.1 1593.4,720.2 1585.5,715.0 1577.6,720.2 1580.1,711.1 1572.7,705.1 1582.2,704.7" fill="#f2c81c"/></svg>
</div></div>
<div id="fg">
<div class="a" style="left:30px;top:985px;width:290px;height:80px;background:radial-gradient(ellipse at center,rgba(4,10,18,.95) 0%,rgba(4,10,18,.75) 45%,rgba(4,10,18,0) 72%)"></div>
<svg class="a" style="left:20px;top:978px" width="70" height="90" viewBox="20 978 70 90">
<circle cx="52.500" cy="1035" r="27.500" fill="#fff"/><path d="M25 984 Q25 982 26.500 983.500 L43.800 1008.500 L52.500 1035 H25Z" fill="#fff"/>
<path d="M44.500 1012 L53 1035" stroke="#0c1826" stroke-width="4.200" stroke-linecap="round"/></svg>
<div class="t" style="top:985px;font-size:38.5px;left:89.0px;letter-spacing:0.15px;font-weight:700;">WORK IN</div>
<div class="t" style="top:1026px;font-size:38.5px;left:89.0px;letter-spacing:0.54px;font-weight:700;">PROGRESS</div>
</div>
</body>
</html>
